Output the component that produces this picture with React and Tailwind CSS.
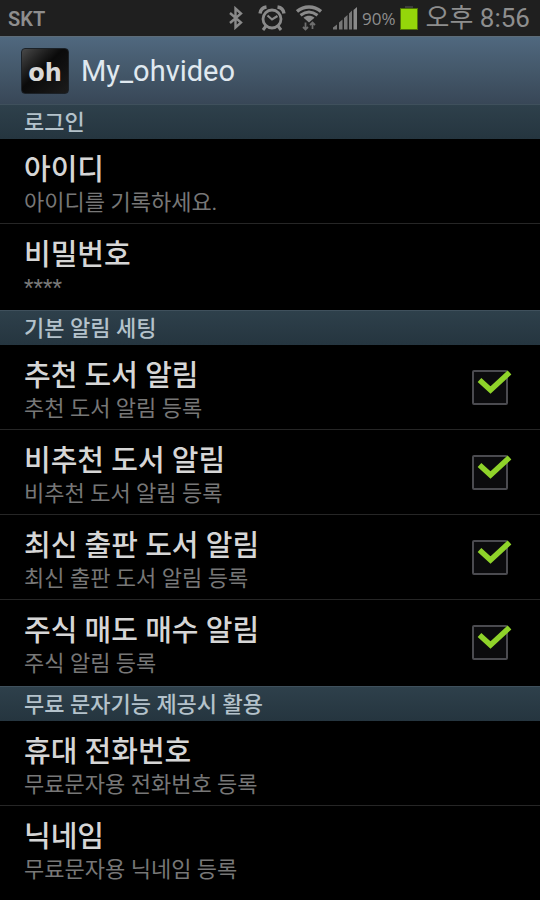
import React, { useState } from 'react';

const loginItems = [
  { title: '아이디', summary: '아이디를 기록하세요.' },
  { title: '비밀번호', summary: '****' },
];

const alarmItems = [
  { id: 'recommend', title: '추천 도서 알림', summary: '추천 도서 알림 등록' },
  { id: 'not-recommend', title: '비추천 도서 알림', summary: '비추천 도서 알림 등록' },
  { id: 'latest', title: '최신 출판 도서 알림', summary: '최신 출판 도서 알림 등록' },
  { id: 'stock', title: '주식 매도 매수 알림', summary: '주식 알림 등록' },
];

const messageItems = [
  { title: '휴대 전화번호', summary: '무료문자용 전화번호 등록' },
  { title: '닉네임', summary: '무료문자용 닉네임 등록' },
];

const BluetoothIcon = () => (
  <svg width="16" height="24" viewBox="0 0 16 24" fill="none" stroke="#8a8a8a" strokeWidth="2.4">
    <path d="M2 7l11 9.500-5.500 5V2.500l5.500 5L2 17" />
  </svg>
);

const AlarmIcon = () => (
  <svg width="28" height="26" viewBox="0 0 28 26" fill="none" stroke="#8a8a8a">
    <circle cx="14" cy="14" r="9" strokeWidth="2.800" />
    <path d="M9.500 10.500L14 14.500l5.500-3.500" strokeWidth="2.200" />
    <path d="M2 8.500C2.500 5 5 2.500 8.500 2M26 8.500C25.500 5 23 2.500 19.500 2" strokeWidth="3.400" />
    <path d="M8 21l-3 4M20 21l3 4" strokeWidth="3" />
  </svg>
);

const WifiIcon = () => (
  <svg width="26" height="26" viewBox="0 0 26 26" fill="none" stroke="#8a8a8a">
    <path d="M1 6.500C8 .500 18 .500 25 6.500" strokeWidth="3.400" />
    <path d="M4.500 10.300C10 6 16 6 21.500 10.300" strokeWidth="3" />
    <path d="M7.500 12.800C11 10.200 15 10.200 18.500 12.800L13 17.500z" fill="#8a8a8a" stroke="none" />
    <path d="M9.500 17.500v6.500M7 22l2.500 2.500L12 22M16.500 24v-6M14 20l2.500-2.500L19 20" stroke="#6e6e6e" strokeWidth="1.800" />
  </svg>
);

const SignalIcon = () => (
  <svg width="26" height="24" viewBox="0 0 26 24" fill="#8a8a8a">
    <path d="M1 23.500v-2l4-3v5zM7 23.500v-7l3.500-3v10zM12 23.500V12l3.500-3v14.500zM17 23.500V7.500l3-3v19z" fill="#777" />
    <path d="M21.500 23.500V4L25 1v22.500z" />
  </svg>
);

const BatteryIcon = () => (
  <svg width="18" height="26" viewBox="0 0 18 26">
    <path d="M5 1h8v3H5z" fill="#3c3c3c" />
    <path d="M0 3h18v22H0z" fill="#4f7307" />
    <path d="M1 4h16v20H1z" fill="#94d60a" />
  </svg>
);

const StatusBar = () => (
  <div className="flex h-9 items-center justify-between bg-[#1f1f1f] px-2 text-[#8e8e8e]">
    <span className="pt-0.5 text-xl font-semibold leading-9">SKT</span>
    <div className="flex items-center">
      <div className="flex items-center gap-2.5">
        <span className="pr-1">
          <BluetoothIcon />
        </span>
        <AlarmIcon />
        <WifiIcon />
        <SignalIcon />
      </div>
      <span className="mx-1 pt-0.5 font-['Open_Sans',sans-serif] text-[17px] font-medium leading-9">90%</span>
      <BatteryIcon />
      <span className="pl-2 pr-0.5 text-[26px] leading-9">오후 8:56</span>
    </div>
  </div>
);

const AppBar = () => (
  <header className="flex h-[68px] items-center gap-3 border-t border-[#5d6c78] bg-linear-to-b from-[#50687f] via-[#44586a] to-[#384757] pl-[21px]">
    <div className="flex h-[46px] w-12 items-center justify-center rounded-sm border border-[#1b2127] bg-linear-to-br from-[#4a4a4a] via-[#0a0a0a] via-45% to-[#1c1c1c] pt-1 font-['DejaVu_Sans',sans-serif] text-2xl font-bold text-[#d8d8d8]">
      oh
    </div>
    <h1 className="pt-0.5 text-[29px] text-[#e0e9f0]">My_ohvideo</h1>
  </header>
);

const SectionTitle = ({ children }) => (
  <h2 className="h-[35px] border-t border-[#3f505c] bg-linear-to-b from-[#2e404b] to-[#25353f] px-6 text-[22px] font-medium leading-9 text-[#b4c2cb]">
    {children}
  </h2>
);

const RowText = ({ title, summary }) => (
  <span className="flex flex-col pb-1 pt-3.5">
    <span className="text-[29px] font-medium leading-[34px] text-[#d6d6d6]">{title}</span>
    <span className="text-[22px] leading-8 text-[#777777]">{summary}</span>
  </span>
);

const ButtonList = ({ items }) => (
  <ul className="divide-y divide-[#262626] pb-0.5">
    {items.map((item) => (
      <li key={item.title}>
        <button type="button" className="block w-full px-6 text-left">
          <RowText title={item.title} summary={item.summary} />
        </button>
      </li>
    ))}
  </ul>
);

const CheckRow = ({ item }) => {
  const [checked, setChecked] = useState(true);

  return (
    <li>
      <label htmlFor={item.id} className="flex items-center justify-between pl-6 pr-8">
        <RowText title={item.title} summary={item.summary} />
        <span className="relative flex">
          <input
            id={item.id}
            type="checkbox"
            checked={checked}
            onChange={(e) => setChecked(e.target.checked)}
            className="h-[35px] w-9 appearance-none rounded-xs border-2 border-[#4b4b50] bg-[#0b0b0d]"
          />
          {checked && (
            <svg className="pointer-events-none absolute left-0 top-0" width="42" height="36" viewBox="0 0 42 36" fill="none">
              <path d="M7.500 10L18.500 20L37.500 2.500" stroke="#8fd32a" strokeWidth="5.500" />
            </svg>
          )}
        </span>
      </label>
    </li>
  );
};

const App = () => {
  return (
    <div className="min-h-screen bg-black font-['Roboto','Noto_Sans_CJK_KR',sans-serif]">
      <StatusBar />
      <AppBar />
      <main>
        <SectionTitle>로그인</SectionTitle>
        <ButtonList items={loginItems} />

        <SectionTitle>기본 알림 세팅</SectionTitle>
        <ul className="divide-y divide-[#262626] pb-0.5">
          {alarmItems.map((item) => (
            <CheckRow key={item.id} item={item} />
          ))}
        </ul>

        <SectionTitle>무료 문자기능 제공시 활용</SectionTitle>
        <ButtonList items={messageItems} />
      </main>
    </div>
  );
};

export default App;
